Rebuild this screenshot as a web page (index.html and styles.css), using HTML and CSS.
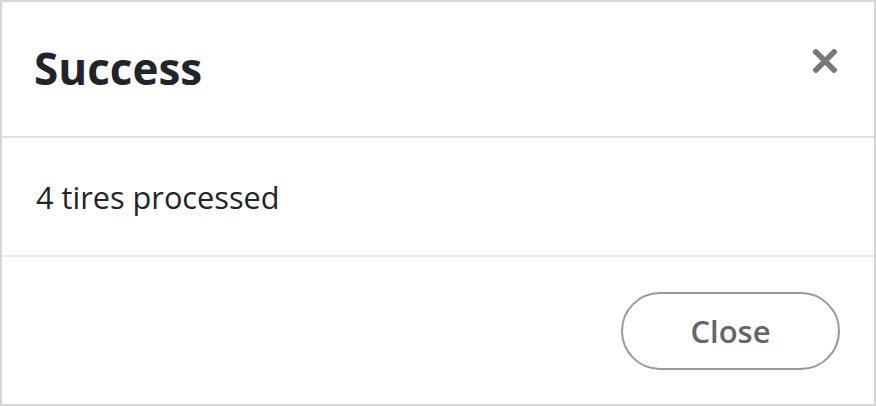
FILE: index.html
```html
<!DOCTYPE html>
<html>
<head>
<meta charset="utf-8">
<link rel="stylesheet" href="styles.css">
</head>
<body>
<div class="modal">
  <div class="modal-header">
    <h1 class="modal-title">Success</h1>
    <button class="close-x" aria-label="Close">
      <svg width="24" height="24" viewBox="0 0 24 24"><path d="M3 3 L21 21 M21 3 L3 21" stroke="#787878" stroke-width="5.5" stroke-linecap="square"/></svg>
    </button>
  </div>
  <div class="modal-body">4 tires processed</div>
  <div class="modal-footer">
    <button class="btn-close">Close</button>
  </div>
</div>
</body>
</html>
```
FILE: styles.css
```css
html, body { margin: 0; padding: 0; background: #fff; }
body { font-family: "Open Sans", sans-serif; color: #212529; }
.modal {
  width: 876px; height: 406px; box-sizing: border-box;
  border: 2px solid #d6d6d6;
  display: flex; flex-direction: column;
}
.modal-header {
  height: 136px; box-sizing: border-box;
  display: flex; align-items: flex-start; justify-content: space-between;
  padding: 0 37px 0 32px;
  border-bottom: 2px solid #dee2e6;
}
.modal-title { margin: 0; font-size: 44px; font-weight: 700; line-height: 1; padding-top: 44px; }
.close-x { border: 0; background: none; padding: 0; margin-top: 47px; width: 24px; height: 24px; }
.close-x svg { display: block; }
.modal-body {
  height: 119px; box-sizing: border-box;
  padding: 0 34px; display: flex; align-items: center;
  font-size: 30.7px;
  border-bottom: 2px solid #e9ecef;
}
.modal-footer { flex: 1; display: flex; justify-content: flex-end; align-items: flex-start; padding: 35px 34px 0; }
.btn-close {
  width: 219px; height: 78px; box-sizing: border-box;
  border: 2px solid #999; border-radius: 40px; background: #fff;
  font-family: "Open Sans", sans-serif; font-weight: 600; font-size: 31px; color: #666;
  padding: 0;
}
```
